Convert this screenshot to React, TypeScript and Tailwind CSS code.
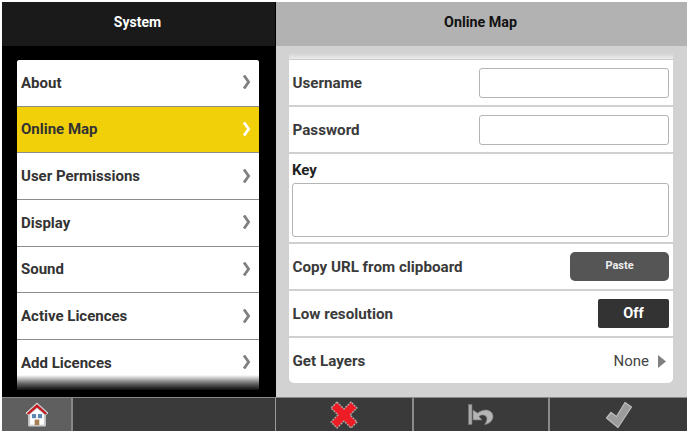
const font = "font-['Roboto','Liberation_Sans',sans-serif]";

function Chevron({ active }: { active?: boolean }) {
  return (
    <svg width="9" height="14" viewBox="0 0 9 14" className="shrink-0 mb-[1px] -translate-x-px">
      <path d="M2 0.5 L6.6 7 L2 13.5" fill="none" stroke={active ? "#ffffff" : "#808080"} strokeWidth="2.8" />
    </svg>
  );
}

function NavRow({ label, active }: { label: string; active?: boolean }) {
  return (
    <div className={`h-[46.7px] shrink-0 flex items-center justify-between pl-1 pr-[7px] border-b-[1.5px] border-[#8c8c8c] ${active ? "bg-[#f1d00a]" : "bg-white"}`}>
      <span className="text-[15px] font-bold text-[#333333]">{label}</span>
      <Chevron active={active} />
    </div>
  );
}

function FormRow({ label, children }: { label: string; children?: React.ReactNode }) {
  return (
    <div className="h-[47px] shrink-0 flex items-center justify-between pl-[3.5px] pr-[4px] border-b-2 border-[#d0d0d0]">
      <span className="text-[15.2px] font-bold text-[#3a3a3a] pt-[2px]">{label}</span>
      {children}
    </div>
  );
}

function Field() {
  return <div className="w-[190px] h-[30px] bg-white rounded-[3px] border border-[#b4b4b4]" />;
}

function Cell({ className, children }: { className: string; children?: React.ReactNode }) {
  return <div className={`h-full flex items-center justify-center ${className}`}>{children}</div>;
}

export default function App() {
  return (
    <div className={`w-[688px] h-[433px] bg-white pt-[2px] pb-[2px] pl-[2px] pr-[1px] flex flex-col overflow-hidden ${font}`}>
      <div className="flex flex-1 min-h-0">
        <div className="w-[273px] flex flex-col bg-black">
          <div className="h-[44px] bg-[#1a1a1a] flex items-center justify-center text-white text-[14px] font-bold pr-[2px] pb-[3px]">System</div>
          <div className="relative ml-[15px] mr-[16px] mt-[14px] h-[330px] rounded-t-[3px] overflow-hidden bg-white flex flex-col">
            <NavRow label="About" />
            <NavRow label="Online Map" active />
            <NavRow label="User Permissions" />
            <NavRow label="Display" />
            <NavRow label="Sound" />
            <NavRow label="Active Licences" />
            <NavRow label="Add Licences" />
            <div className="absolute left-0 right-0 bottom-0 h-[15px] bg-gradient-to-b from-transparent via-[#777777] to-[#111111]" />
          </div>
        </div>
        <div className="w-px bg-black" />
        <div className="flex-1 flex flex-col bg-[#d2d2d2]">
          <div className="h-[44px] bg-[#b2b2b2] flex items-center justify-center text-[#111111] text-[14.3px] font-bold pr-[2px] pb-[3px]">Online Map</div>
          <div className="ml-[13px] mr-[14px] mt-[7px] h-[7px] bg-gradient-to-b from-[#d2d2d2] to-[#ececec] border-b border-[#cccccc]" />
          <div className="ml-[13px] mr-[14px] bg-white rounded-b-[5px] flex flex-col">
            <FormRow label="Username"><Field /></FormRow>
            <FormRow label="Password"><Field /></FormRow>
            <div className="h-[90px] shrink-0 flex flex-col pl-[3px] pr-[4px] border-b-2 border-[#d0d0d0]">
              <span className="text-[15px] font-bold text-[#222222] leading-[18px] mt-[7px]">Key</span>
              <div className="mt-[4px] h-[54px] bg-white rounded-[3px] border border-[#b4b4b4]" />
            </div>
            <FormRow label="Copy URL from clipboard">
              <div className="w-[99px] h-[29px] rounded-[5px] bg-[#555555] flex items-center justify-center text-[11px] font-bold text-[#eeeeee]">Paste</div>
            </FormRow>
            <FormRow label="Low resolution">
              <div className="w-[71px] h-[29px] rounded-[2px] bg-[#333333] flex items-center justify-center text-[14.5px] font-bold text-white">Off</div>
            </FormRow>
            <div className="h-[45px] flex items-center justify-between pl-[3.5px] pr-[7px]">
              <span className="text-[15.2px] font-bold text-[#3a3a3a] pt-[2px]">Get Layers</span>
              <span className="flex items-center gap-[9px] text-[15px] text-[#444444] pt-[1px]">
                None
                <svg width="8" height="13" viewBox="0 0 8 13"><path d="M0 0 L8 6.5 L0 13 Z" fill="#808080" /></svg>
              </span>
            </div>
          </div>
        </div>
      </div>
      <div className="h-[34px] shrink-0 flex bg-[#3a3a3a] border-t border-[#8a8a8a]">
        <Cell className="w-[71px] bg-[#5f5f5f] border-r-2 border-[#888888]">
          <svg width="24" height="25" viewBox="0 0 26 27">
            <path d="M13 1 L25 12 L22 14 L22 26 L4 26 L4 14 L1 12 Z" fill="#c4c4c4" stroke="#d8d8d8" strokeWidth="1" />
            <path d="M13 2.5 L24 12.5 L22 13.5 L13 6 L4 13.5 L2 12.5 Z" fill="#c2161c" />
            <path d="M13 7 L20.5 13.5 L20.5 24.5 L5.5 24.5 L5.5 13.5 Z" fill="#ffffff" />
            <rect x="7.5" y="13" width="4.5" height="4.5" fill="#5b87b5" />
            <rect x="14" y="13" width="4.5" height="4.5" fill="#5b87b5" />
            <rect x="10.5" y="19" width="5" height="6" fill="#a77f55" />
          </svg>
        </Cell>
        <Cell className="w-[202px]" />
        <div className="w-px bg-[#999999]" />
        <Cell className="w-[138px] border-r-2 border-[#8a8a8a]">
          <svg width="28" height="28" viewBox="0 0 28 28">
            <path d="M7 1 L14 8 L21 1 L27 7 L20 14 L27 21 L21 27 L14 20 L7 27 L1 21 L8 14 L1 7 Z" fill="#ee1c25" stroke="#a9a9a9" strokeWidth="1.4" strokeLinejoin="round" strokeDasharray="2 1" />
          </svg>
        </Cell>
        <Cell className="w-[136px] border-r-2 border-[#8a8a8a]">
          <svg width="26" height="22" viewBox="0 0 26 22">
            <rect x="0.5" y="0.5" width="3.5" height="20" fill="#a8a8a8" stroke="#777777" strokeWidth="0.6" />
            <path d="M5 6 L5 16 L14 16 L11 12.5 C14 10 17 11 18.5 13 C19.5 15 18.5 18 16.5 20.5 C22 20 25.5 16 25 11.5 C24 6 17 3.5 9.5 9 Z" fill="#b5b5b5" stroke="#777777" strokeWidth="0.7" strokeLinejoin="round" />
          </svg>
        </Cell>
        <Cell className="flex-1">
          <svg width="28" height="28" viewBox="0 0 28 28">
            <path d="M20 1.5 L26.5 6 L13 26.5 L1.5 17 L6 11.5 L11.5 15.5 Z" fill="#9c9c9c" stroke="#bdbdbd" strokeWidth="1.2" strokeLinejoin="round" />
          </svg>
        </Cell>
      </div>
    </div>
  );
}
